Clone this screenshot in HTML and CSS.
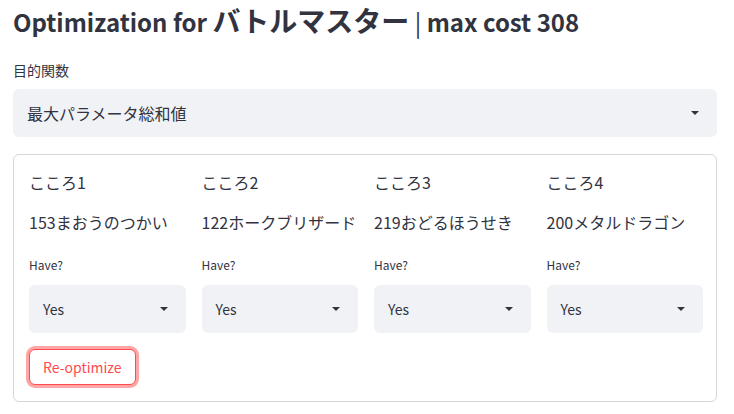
FILE: index.html
```html
<!DOCTYPE html>
<html lang="ja">
<head>
<meta charset="utf-8">
<title>Optimization</title>
<link rel="stylesheet" href="styles.css">
</head>
<body>
<div class="app">
  <h1 class="title">Optimization for <span class="jp">バトルマスター</span> <span class="bar">|</span> max cost 308</h1>

  <div class="field">
    <label class="label">目的関数</label>
    <div class="select">
      <span class="value">最大パラメータ総和値</span>
      <svg class="caret" width="8" height="4" viewBox="0 0 8 4"><polygon points="0,0 8,0 4,4" fill="#31333F"/></svg>
    </div>
  </div>

  <div class="form">
    <div class="cols">
      <div class="col">
        <div class="col-title">こころ1</div>
        <div class="col-name">153まおうのつかい</div>
        <label class="col-label">Have?</label>
        <div class="select sm">
          <span class="value latin">Yes</span>
          <svg class="caret" width="8" height="4" viewBox="0 0 8 4"><polygon points="0,0 8,0 4,4" fill="#31333F"/></svg>
        </div>
      </div>
      <div class="col">
        <div class="col-title">こころ2</div>
        <div class="col-name">122ホークブリザード</div>
        <label class="col-label">Have?</label>
        <div class="select sm">
          <span class="value latin">Yes</span>
          <svg class="caret" width="8" height="4" viewBox="0 0 8 4"><polygon points="0,0 8,0 4,4" fill="#31333F"/></svg>
        </div>
      </div>
      <div class="col">
        <div class="col-title">こころ3</div>
        <div class="col-name">219おどるほうせき</div>
        <label class="col-label">Have?</label>
        <div class="select sm">
          <span class="value latin">Yes</span>
          <svg class="caret" width="8" height="4" viewBox="0 0 8 4"><polygon points="0,0 8,0 4,4" fill="#31333F"/></svg>
        </div>
      </div>
      <div class="col">
        <div class="col-title">こころ4</div>
        <div class="col-name">200メタルドラゴン</div>
        <label class="col-label">Have?</label>
        <div class="select sm">
          <span class="value latin">Yes</span>
          <svg class="caret" width="8" height="4" viewBox="0 0 8 4"><polygon points="0,0 8,0 4,4" fill="#31333F"/></svg>
        </div>
      </div>
    </div>
    <button class="btn" type="button">Re-optimize</button>
  </div>
</div>
</body>
</html>
```

FILE: styles.css
```css
* { box-sizing: border-box; }

body {
  margin: 0;
  background: #ffffff;
  color: #31333F;
  font-family: "Noto Sans CJK JP", "Source Sans Pro", sans-serif;
}

.app {
  padding: 0 17px 0 13px;
}

.title {
  margin: 3px 0 0;
  font-size: 24px;
  line-height: 38px;
  font-weight: 700;
  white-space: nowrap;
}

.jp {
  font-size: 28px;
  line-height: 1;
}

.bar {
  font-weight: 400;
}

.label {
  display: block;
  font-size: 14px;
  line-height: 20px;
}

.field .label {
  margin-top: 19px;
}

.select {
  display: flex;
  align-items: center;
  justify-content: space-between;
  height: 48px;
  margin-top: 9px;
  padding: 0 18px 0 14px;
  background: #f0f2f6;
  border-radius: 6px;
  font-size: 16px;
}

.latin {
  font-size: 14px;
}

.caret {
  display: block;
  flex: none;
}

.form {
  margin-top: 17px;
  border: 1px solid rgba(49, 51, 63, 0.2);
  border-radius: 6px;
  padding: 15px 13px 16px 15px;
}

.cols {
  display: grid;
  grid-template-columns: repeat(4, 1fr);
  column-gap: 16px;
}

.col {
  display: flex;
  flex-direction: column;
  min-width: 0;
}

.col-title {
  font-size: 16px;
  line-height: 24px;
}

.col-name {
  margin-top: 16px;
  font-size: 16px;
  line-height: 24px;
  white-space: nowrap;
}

.col-label {
  display: block;
  margin-top: 21px;
  font-size: 12px;
  line-height: 20px;
}

.select.sm {
  margin-top: 10px;
}

.btn {
  display: block;
  margin-top: 16px;
  height: 36px;
  padding: 0 13px;
  border: 1px solid #ff4b4b;
  border-radius: 6px;
  background: #ffffff;
  color: #ff4b4b;
  font-family: inherit;
  font-size: 14px;
  line-height: 20px;
  box-shadow: 0 0 0 3px rgba(255, 75, 75, 0.5);
}
```
